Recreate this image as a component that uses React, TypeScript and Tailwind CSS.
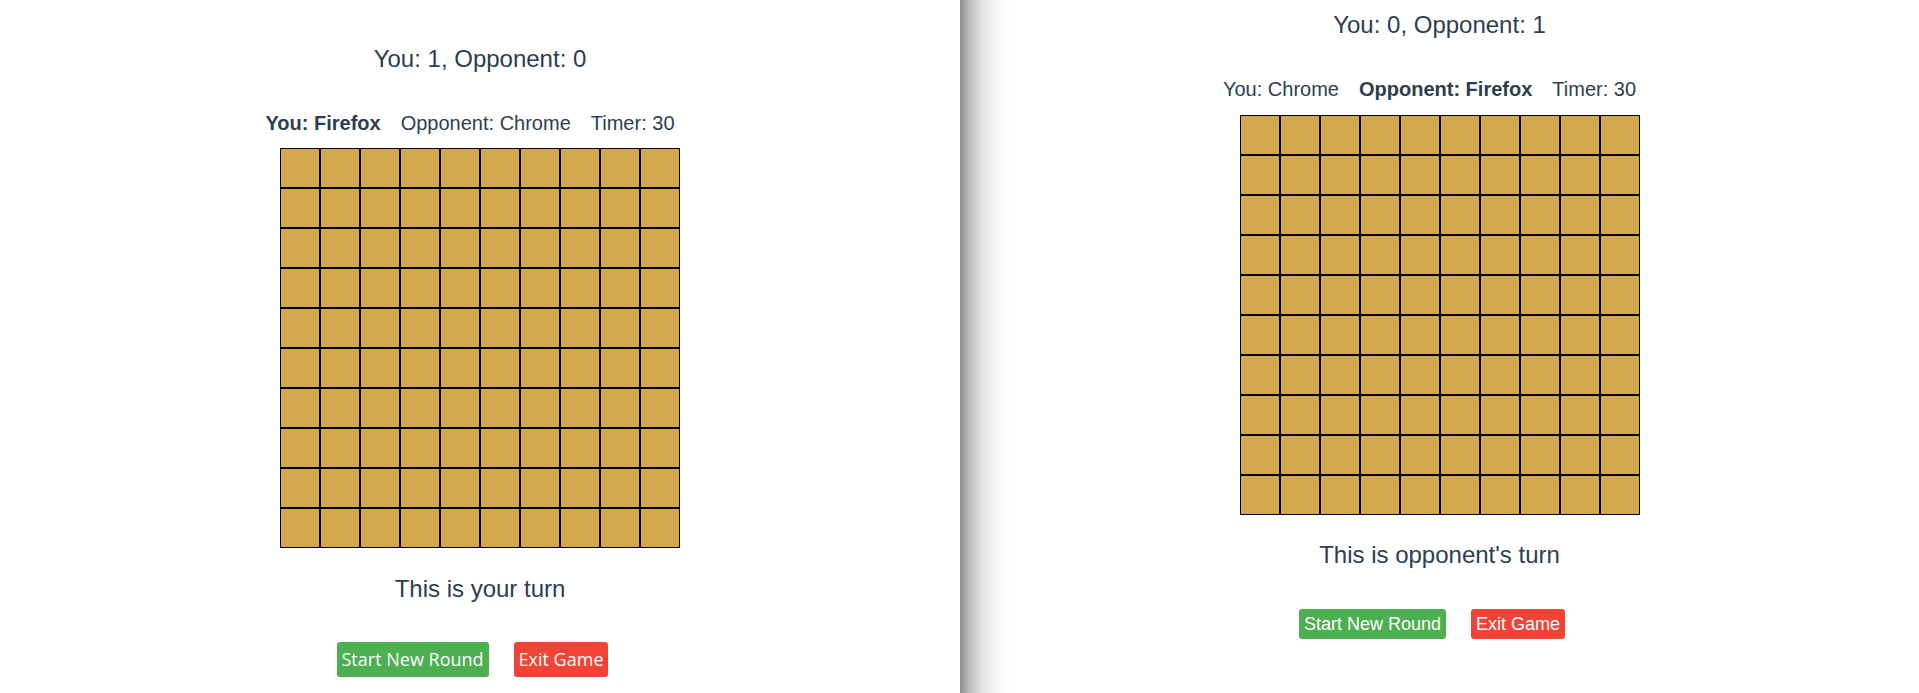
import React from "react";

type PaneProps = {
  you: string;
  opponent: string;
  yourTurn: boolean;
  score: [number, number];
  buttonFont: string;
  offsets: { top: string; board: string; turn: string; buttons: string };
  shadow?: boolean;
};

const cells = Array.from({ length: 100 }, (_, i) => i);

function Board() {
  return (
    <div className="grid grid-cols-[repeat(10,40px)]">
      {cells.map((i) => (
        <div key={i} className="h-[40px] w-[40px] border border-black bg-[#d3a74c]" />
      ))}
    </div>
  );
}

function Pane({ you, opponent, yourTurn, score, buttonFont, offsets, shadow }: PaneProps) {
  return (
    <div className={`relative flex flex-1 flex-col items-center bg-white ${offsets.top}`}>
      {shadow && (
        <div className="pointer-events-none absolute inset-y-0 left-0 w-[52px] bg-[linear-gradient(to_right,#8e8e8e,#bcbcbc_18%,#e2e2e2_42%,#f5f5f5_68%,#ffffff)]" />
      )}
      <p className="text-[24px] leading-[28px]">
        You: {score[0]}, Opponent: {score[1]}
      </p>

      <div className="mt-[39px] flex text-[20px] leading-[23px]">
        <span className={`mr-5 ${yourTurn ? "font-bold" : ""}`}>You: {you}</span>
        <span className={`mr-5 ${yourTurn ? "" : "font-bold"}`}>Opponent: {opponent}</span>
        <span className="mr-5">Timer: 30</span>
      </div>

      <div className={offsets.board}>
        <Board />
      </div>

      <p className={`text-[24px] leading-[28px] ${offsets.turn}`}>
        {yourTurn ? "This is your turn" : "This is opponent's turn"}
      </p>

      <div className={`mr-[15px] flex gap-[25px] text-[18px] text-white ${offsets.buttons} ${buttonFont}`}>
        <button className="rounded-[3px] bg-[#4caf50] px-[5px] py-[5px]">Start New Round</button>
        <button className="rounded-[3px] bg-[#f44336] px-[5px] py-[5px]">Exit Game</button>
      </div>
    </div>
  );
}

export default function App() {
  return (
    <div className="flex h-[693px] w-[1919px] overflow-hidden bg-white font-['Liberation_Sans',Arial,sans-serif] text-[#2c3e50]">
      <div className="flex w-[960px] shrink-0">
        <Pane
          you="Firefox"
          opponent="Chrome"
          yourTurn
          score={[1, 0]}
          buttonFont="font-['Open_Sans',sans-serif] leading-[25px]"
          offsets={{ top: "pt-[45px]", board: "mt-[13px]", turn: "mt-[27px]", buttons: "mt-[39px]" }}
        />
      </div>
      <div className="flex flex-1">
        <Pane
          you="Chrome"
          opponent="Firefox"
          yourTurn={false}
          score={[0, 1]}
          buttonFont="font-['Liberation_Sans',Arial,sans-serif] leading-[20px]"
          offsets={{ top: "pt-[11px]", board: "mt-[14px]", turn: "mt-[26px]", buttons: "mt-[40px]" }}
          shadow
        />
      </div>
    </div>
  );
}
